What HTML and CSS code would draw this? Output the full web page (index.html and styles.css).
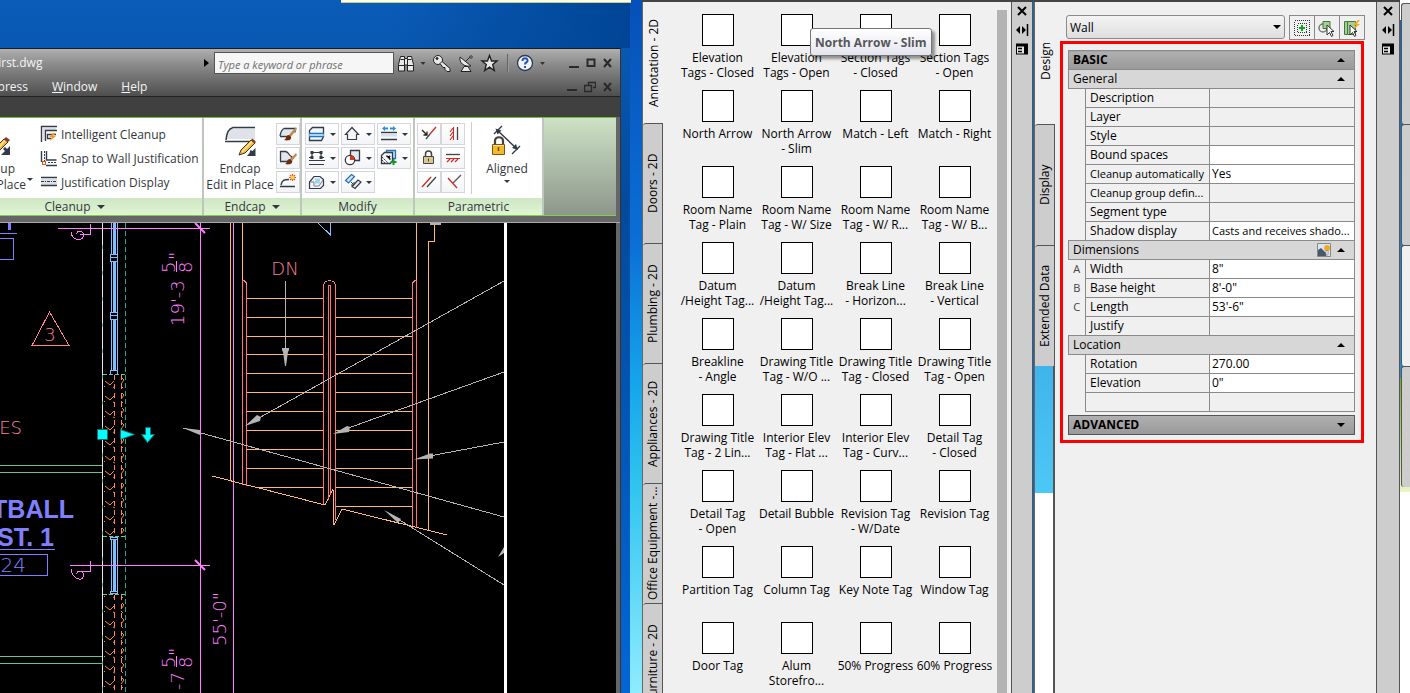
FILE: index.html
```html
<!DOCTYPE html>
<html lang="en">
<head>
<meta charset="utf-8">
<title>First.dwg</title>
<link rel="stylesheet" href="styles.css">
</head>
<body>
<div class="desktop">
<main class="workspace">
  <div class="hint-strip"></div>
  <section class="cad">
    <header class="cad-head">
      <div class="title-row">
        <span class="doc-name"><span>First.dwg</span></span>
        <span class="search-arrow"></span>
        <input class="search" type="text" placeholder="Type a keyword or phrase" aria-label="Search">
        <div class="tools">
          <svg width="152" height="22" viewBox="396 52 152 22" aria-hidden="true">
            <g fill="#e8e8e8" stroke="#222" stroke-width="1"><path d="M400.500 56.500h4v2h3v-2h4l2 8v6.500h-6v-6h-3v6h-6v-6.500zM398.500 65.500h6M407.500 65.500h6M400.500 59.500h4M407.500 59.500h4M404.500 59v6M407.500 59v6"/>
            <circle cx="438" cy="60" r="4.500"/><path d="M440 63.500l2-2 8 7v3h-3l-2-2v-2h-2z"/><circle cx="437" cy="58.500" r="1" fill="#222"/>
            <path d="M460 57c-1 6 4 10 11 9zM461 71.500h10l-3-5h-4zM466 61l4-4"/><circle cx="471" cy="57" r="1.200"/>
            <path d="M489.500 55.500l2 5.500h5.500l-4.300 3.500 1.600 6-4.800-3.300-4.800 3.300 1.600-6L482 61h5.500z" stroke-width="1.400"/></g>
            <path d="M420.500 62h5l-2.500 3zM540 62h5l-2.500 3z" fill="#333"/><path d="M507.500 54v18" stroke="#666"/><path d="M508.500 54v18" stroke="#999"/>
            <circle cx="525" cy="63" r="7.500" fill="#f2f4f8" stroke="#2b3a55" stroke-width="1.300"/><path d="M522.500 61c0-4 5.500-3.500 5 0-.3 1.500-2.500 1.500-2.500 3.500M525 66v2" fill="none" stroke="#2552b8" stroke-width="2"/>
          </svg>
        </div>
        <div class="winbtns">
          <button aria-label="Minimize"><svg width="12" height="12" viewBox="0 0 12 12"><path d="M1 10h10" stroke="#2a2a2a" stroke-width="2"/></svg></button>
          <button aria-label="Maximize"><svg width="12" height="12" viewBox="0 0 12 12"><path d="M2.500 2.500h7v6.500h-7z" fill="none" stroke="#2a2a2a" stroke-width="2"/></svg></button>
          <button aria-label="Close"><svg width="12" height="12" viewBox="0 0 12 12"><path d="M2 2l7 8M9 2l-7 8" stroke="#2a2a2a" stroke-width="2"/></svg></button>
        </div>
      </div>
      <div class="menu-row">
        <nav class="menu"><a class="menu-cut" href="#"><span>Express</span></a><a href="#"><u>W</u>indow</a><a href="#"><u>H</u>elp</a></nav>
        <div class="winbtns">
          <button aria-label="Minimize drawing"><svg width="12" height="12" viewBox="0 0 12 12"><path d="M1 9h10" stroke="#2a2a2a" stroke-width="2"/></svg></button>
          <button aria-label="Restore drawing"><svg width="12" height="12" viewBox="0 0 12 12"><path d="M4.500 4V1.500h7v5H9M.5 4.500h7v6h-7z" fill="none" stroke="#2a2a2a" stroke-width="1.400"/></svg></button>
          <button aria-label="Close drawing"><svg width="12" height="12" viewBox="0 0 12 12"><path d="M2 2l7 8M9 2l-7 8" stroke="#2a2a2a" stroke-width="2"/></svg></button>
        </div>
      </div>
    </header>
    <div class="tabs-band"></div>
    <div class="ribbon">
      <section class="panel p-clean">
        <div class="panel-body">
          <button class="big cut"><svg width="32" height="34" viewBox="0 0 32 34"><path d="M14 30l2-5 10-10 4 3-10 10z" fill="#f5b93c" stroke="#4a3216"/><path d="M17 27L27 16.500" stroke="#ffe9a8" stroke-width="1.300"/><path d="M26 15l2-2 4 3-2 2z" fill="#8a3a1a"/><path d="M23 31h9v-9l-3 3-2-2-2 2 2 2z" fill="#333c46"/></svg><span>Cleanup</span><span>Edit in Place</span></button>
          <i class="caret side"></i>
          <div class="cmds">
            <button><svg width="18" height="18" viewBox="0 0 18 18"><path d="M3 3h13v2H5v10H3z" fill="#dcdfe6"/><path d="M1.500 17V1.500H17" fill="none" stroke="#333c46" stroke-width="1.400"/><path d="M5.500 16V5.500H17M16 9.500H7.500v4h4" fill="none" stroke="#333c46" stroke-width="1.300"/><path d="M13 8l-4 4h3l-2 4 6-5h-3l3-3z" fill="#f29a1f"/></svg>Intelligent Cleanup</button>
            <button><svg width="18" height="18" viewBox="0 0 18 18"><path d="M1.500 2v11M6.500 2v9h10M6 16.500h11" fill="none" stroke="#333c46" stroke-width="1.400"/><path d="M4.500 2v10M8 13.500h9" stroke="#333c46" stroke-dasharray="2 1"/><rect x="2.500" y="12.500" width="3" height="3" fill="#fff" stroke="#e05a20"/></svg>Snap to Wall Justification</button>
            <button><svg width="18" height="18" viewBox="0 0 18 18"><path d="M1 6h16v6H1z" fill="#dcdfe6"/><path d="M1 4.500h16M1 12.500h16" stroke="#333c46" stroke-width="1.400"/><path d="M1 8.500h16" stroke="#333c46" stroke-dasharray="3 1 1 1"/></svg>Justification Display</button>
          </div>
        </div>
        <h2>Cleanup <i class="caret"></i></h2>
      </section>
      <section class="panel p-end">
        <div class="panel-body">
          <button class="big"><svg width="32" height="34" viewBox="0 0 32 34"><path d="M3.500 15C4 9 6 5 9 4.500h22V15z" fill="#dfe2e9"/><path d="M1 17.500h30M2 16c1-7 2-11 7-12.500h22" fill="none" stroke="#333c46" stroke-width="1.500"/><path d="M15 31l2-5 10-10 4 3-10 10z" fill="#f5b93c" stroke="#4a3216"/><path d="M18 28l10-10.500" stroke="#ffe9a8" stroke-width="1.300"/><path d="M27 16l1.500-1.500L32 18l-1.500 1.500z" fill="#8a3a1a"/><path d="M23 32h8.500v-8l-3 3-2-1-1 3z" fill="#333c46"/></svg><span>Endcap</span><span>Edit in Place</span></button>
          <div class="minis one">
            <button aria-label="Endcap style"><svg width="18" height="18" viewBox="0 0 18 18"><path d="M1 11c1-4 1-6 4-7.500h11v4M1 11.500h8" fill="#e3e6ec" stroke="#333c46" stroke-width="1.300"/><path d="M17 2l-8 9 2 2 7-9z" fill="#b98b52"/><path d="M10 10c-4 0-2 4-5 5 4 1 8 0 7-3z" fill="#6b2f10"/></svg></button>
            <button aria-label="Opening endcap"><svg width="18" height="18" viewBox="0 0 18 18"><path d="M1.500 12V2.500h5c4 1 3 4 6 5v5H1" fill="#e3e6ec" stroke="#333c46" stroke-width="1.300"/><path d="M17 4l-7 7 2 2 6-7z" fill="#b98b52"/><path d="M11 10c-4 0-2 4-5 5 4 1 8 0 7-3z" fill="#6b2f10"/></svg></button>
            <button aria-label="New endcap"><svg width="18" height="18" viewBox="0 0 18 18"><path d="M2 12c1-5 3-5.500 8-5.500M1 13.500h15" fill="none" stroke="#333c46" stroke-width="1.400"/><path d="M13.500 1v7M10 4.500h7M11 2l5 5M16 2l-5 5" stroke="#e8541c" stroke-width="1.200"/><circle cx="13.500" cy="4.500" r="1.800" fill="#ffd84a"/></svg></button>
          </div>
        </div>
        <h2>Endcap <i class="caret"></i></h2>
      </section>
      <section class="panel p-mod">
        <div class="panel-body">
          <div class="minis three">
            <button aria-label="Cut"><svg width="18" height="18" viewBox="0 0 18 18"><path d="M1.500 15.500v-10l3-3h11v9l-2 4z" fill="#f4f5f8" stroke="#333c46" stroke-width="1.300"/><path d="M1 8.500h15M1 11.500h15" stroke="#1976c8" stroke-width="1.500"/><path d="M1 10h15" stroke="#a8d4f4" stroke-width="1.500"/></svg><i class="caret"></i></button>
            <button aria-label="Roof line"><svg width="18" height="18" viewBox="0 0 18 18"><path d="M1.500 9.500L8 2.500l6.500 7h-2v5h-9v-5z" fill="#f4f5f8" stroke="#333c46" stroke-width="1.200"/></svg><i class="caret"></i></button>
            <button aria-label="Offset"><svg width="18" height="18" viewBox="0 0 18 18"><path d="M4 3.500h4M10 3.500h4" stroke="#2a8fe0" stroke-width="2"/><path d="M5 1L2 3.500 5 6zM13 1l3 2.500L13 6z" fill="#2a8fe0"/><path d="M1 7.500h16M1 14.500h16" stroke="#333c46" stroke-width="1.300"/><path d="M1 8.500h16v3H1z" fill="#dcdfe6"/></svg><i class="caret"></i></button>
            <button aria-label="Vertex"><svg width="18" height="18" viewBox="0 0 18 18"><path d="M1 8.500h3v-5h9v5h3M1 11.500h16M1 15.500h15" fill="none" stroke="#333c46" stroke-width="1.200"/><path d="M2.500 2h3v3h-3zM11.500 2h3v3h-3zM2.500 7h3v3h-3zM11.500 7h3v3h-3z" fill="#333c46"/></svg><i class="caret"></i></button>
            <button aria-label="Interference"><svg width="18" height="18" viewBox="0 0 18 18"><path d="M6.500 1.500h9v10h-9z" fill="#e6e8ee" stroke="#333c46" stroke-width="1.300"/><circle cx="6" cy="11" r="4.700" fill="#fff" stroke="#333c46" stroke-width="1.300"/><path d="M6 11V6.500c3 0 4.500 2 4.500 4.500z" fill="#d8341c"/></svg><i class="caret"></i></button>
            <button aria-label="Add body"><svg width="18" height="18" viewBox="0 0 18 18"><path d="M6.500 4V1.500h9v8H13" fill="#bfe0f8" stroke="#2571b8" stroke-width="1.300"/><path d="M1.500 6.500l3-3h8v8l-2 3h-9z" fill="#f4f5f8" stroke="#333c46" stroke-width="1.300"/><path d="M2 8l7 7M2 11l4 4M6 7h4v4" stroke="#333c46" stroke-dasharray="2 1"/><path d="M13.500 10v6M10.500 13h6" stroke="#12962a" stroke-width="2"/></svg><i class="caret"></i></button>
            <button aria-label="Boolean"><svg width="18" height="18" viewBox="0 0 18 18"><path d="M1.500 15.500V9L6 3.500h6l3.500 3v6l-3 3z" fill="#eef2f6" stroke="#333c46" stroke-width="1.200"/><path d="M2 9h4v4h5l4-6" fill="none" stroke="#7a858f"/><path d="M7 5.500h5v5H7z" fill="#9fd4ea"/></svg><i class="caret"></i></button>
            <button aria-label="Reverse"><svg width="18" height="18" viewBox="0 0 18 18"><path d="M1.500 7.500l6-6 3 2-6 6.500z" fill="#cfe6fa" stroke="#2571b8" stroke-width="1.200"/><path d="M8 13.500l6-6.500 3 2-6 6.500z" fill="#e6e8ee" stroke="#333c46" stroke-width="1.200"/><path d="M7 9l3 3M10 9v3H7" fill="none" stroke="#333c46"/></svg><i class="caret"></i></button>
          </div>
        </div>
        <h2>Modify</h2>
      </section>
      <section class="panel p-par">
        <div class="panel-body">
          <div class="minis two">
            <button aria-label="Coincident"><svg width="18" height="18" viewBox="0 0 18 18"><path d="M2 5l5 5M7 6.500V10H3.500" fill="none" stroke="#222" stroke-width="1.300"/><path d="M6 14l4-5" stroke="#444" stroke-width="1.300"/><path d="M10 9l6-7" stroke="#d02a24" stroke-width="1.300"/></svg></button>
            <button aria-label="Vertical"><svg width="18" height="18" viewBox="0 0 18 18"><path d="M9.500 2v13M9 3L6 7M9 7l-3 4M9 11l-3 4" stroke="#d02a24" stroke-width="1.100"/><path d="M13.500 2v13" stroke="#444" stroke-width="1.300"/></svg></button>
            <button aria-label="Fix"><svg width="18" height="18" viewBox="0 0 18 18"><path d="M5.500 8V5c0-4 6-4 6 0v3" fill="none" stroke="#444" stroke-width="1.500"/><path d="M3.500 7.500h10v7h-10z" fill="#d9c78e" stroke="#444"/><path d="M8.500 9.500v3" stroke="#444"/></svg></button>
            <button aria-label="Horizontal"><svg width="18" height="18" viewBox="0 0 18 18"><path d="M2 5.500h14" stroke="#444" stroke-width="1.300"/><path d="M2 9.500h14M6 10l-3 3M10 10l-3 3M14 10l-3 3" stroke="#d02a24" stroke-width="1.200"/></svg></button>
            <button aria-label="Parallel"><svg width="18" height="18" viewBox="0 0 18 18"><path d="M2 14L11 4" stroke="#d02a24" stroke-width="1.300"/><path d="M7 14l9-10" stroke="#444" stroke-width="1.300"/></svg></button>
            <button aria-label="Perpendicular"><svg width="18" height="18" viewBox="0 0 18 18"><path d="M9 10l8-8" stroke="#555" stroke-width="1.300"/><path d="M4 5l9 10" stroke="#d02a24" stroke-width="1.300"/></svg></button>
          </div>
          <div class="rule"></div>
          <button class="big aligned"><svg width="32" height="34" viewBox="0 0 32 34"><path d="M6 6l19 18M3 10l8-8M21 30l8-8" stroke="#333c46" stroke-width="1.400"/><path d="M4.500 4.500l6 2-4 4zM27 26l-6-2 4-4z" fill="#333c46"/><path d="M4 21v-4c0-5 8-5 8 0v4" fill="none" stroke="#494130" stroke-width="2.200"/><path d="M1.500 20.500h12v10h-12z" fill="#f6b92b" stroke="#7a5410"/><path d="M2 21.500h11" stroke="#ffe08a"/><path d="M7.500 23v4" stroke="#6b4a10" stroke-width="1.500"/></svg><span>Aligned</span><i class="caret"></i></button>
        </div>
        <h2>Parametric</h2>
      </section>
      <div class="ribbon-rest"></div>
    </div>
    <div class="frame-band"></div>
    <div class="canvas">
      <svg class="drawing" width="616" height="470" viewBox="0 223 616 470">
        <defs>
          <pattern id="brick" x="103" y="374" width="23" height="15" patternUnits="userSpaceOnUse">
            <path d="M2 7l5 4 4-4M1 12l1 1M10 13l2 1M19 4l2 2-3 4M18 12l2 2" fill="none" stroke="#ff8c1a"/>
          </pattern>
        </defs>
        <g fill="none" shape-rendering="crispEdges">
          <path d="M102.500 223v470" stroke="#63c9a0"/><path d="M102.500 223v470" stroke="#e8e8e8" stroke-dasharray="22 4"/>
          <path d="M125.500 223v470" stroke="#1fa894" stroke-dasharray="5 3"/>
          <path d="M103 374h22v163h-22zM103 594h22v99h-22z" fill="url(#brick)"/>
          <path d="M114.500 375v162M121.500 375v162M114.500 595v98M121.500 595v98" stroke="#ff7f7f" stroke-dasharray="5 4"/>
          <path d="M103 374.500h22M103 536.500h22M103 594.500h22" stroke="#63c9a0" stroke-dasharray="4 2"/>
          <g stroke="#7fbfff"><path d="M111.500 223v149M113.500 223v149M114.500 223v149M117.500 223v149M111.500 539v53M113.500 539v53M114.500 539v53M117.500 539v53M115.500 223v149M115.500 539v53"/><path d="M110.500 254.500h7v7h-7zM110.500 312.500h7v7h-7zM110.500 374V370.500h7v3M110.500 537.500h7v2h-7zM110.500 591.500h7v2h-7z" fill="#000"/><path d="M110 257.500h7M110 315.500h7"/></g>
          <path d="M0 465.500h102M0 472.500h102M0 656.500h102M0 663.500h102" stroke="#5fc795"/>
          <g stroke="#ff7fff"><path d="M200.500 223v470M233.500 223v470M58 228.500h152M70 565.500h140"/><path d="M195 223l10 10M195 560l10 10" stroke-width="2" shape-rendering="auto"/></g>
          <g stroke="#ff7fff"><path d="M90.500 224v10h-11M71 232c1 9 10 9 12 5 2-6-4-8-7-3M90.500 561v10h-11M71 569c1 9 10 13 12 8 2-6-4-8-7-3"/></g>
          <g stroke="#ffb973"><path d="M230.500 223v258M242.500 223v58M416.500 223v58M434.500 223v18.500h-6V530"/>
          <path d="M247 298.500h76M336 298.500h76M247 317.500h76M336 317.500h76M247 336.500h76M336 336.500h76M247 354.500h76M336 354.500h76M247 373.500h76M336 373.500h76M247 392.500h76M336 392.500h76M247 411.500h76M336 411.500h76M247 430.500h76M336 430.500h76M247 449.500h76M336 449.500h76M247 468.500h76M336 468.500h76M256 487.500h67M336 487.500h76M336 506.500h76"/>
          <path d="M212 476l113 29 8-16 1 36 8-16 105 26"/></g>
          <g stroke="#ff7373"><path d="M242.500 280v205M246.500 283v203M323.500 285v219M335.500 285v235M328.500 500V285.500h2V495M412.500 283v243M416.500 281v247"/><path d="M242.500 280.500c2 0 4 1 4 4M323.500 286c0-7 12-7 12 0M416.500 280.500c-2 0-4 1-4 4" stroke="#ff8099"/></g>
          <path d="M318 223l12.500 12V223" stroke="#7fbfff"/>
          <g stroke="#b4b4b4"><path d="M285.500 281v70M504 281L250 423M504 372L340 431M504 442l-80 15M183 428l321 89M390 514l114 71"/></g>
          <path d="M505.500 223v470" stroke="#fff" stroke-width="3"/>
          <path d="M32 345.500h37L49.500 312z" stroke="#ff8099"/>
          <path d="M0 233.500h17M0 238.500h13.500v21H0M0 554.500h47.500v21H0" stroke="#8080ff"/><path d="M0 549.500h55" stroke="#8080ff"/>
        </g>
        <g fill="#b4b4b4"><path d="M282 348h7v2l-1 2-2 14h-1l-2-14-1-2zM245 426l12-11 4 2-1 4zM333 434l14-8 3 1-1 5zM414 459.500l16-6 3 0v5zM183 428l17 2v5zM384 510l17 9-3 4zM430 223h11v2h-11zM498 557l6-10v6z"/></g>
        <path d="M8 223h3v7H8z" fill="#8080ff"/>
        <g fill="#00ffff" stroke="#116d6d"><path d="M97.500 429.500h10v10h-10zM120.500 429.500l14 5-14 5zM145.500 427.500h5v7h4l-7 8-6-8h4z"/></g>
        <g class="cad-text">
          <text class="pink" x="50" y="341" text-anchor="middle">3</text>
          <text class="pink" x="22" y="434" text-anchor="end">ES</text>
          <text class="pink" x="285" y="275" text-anchor="middle">DN</text>
          <text class="violet" x="26" y="572" text-anchor="end">24</text>
          <text class="violet heavy" x="74" y="518" text-anchor="end">OTBALL</text>
          <text class="violet heavy" x="54" y="546" text-anchor="end">ST. 1</text>
          <g class="magenta">
            <text transform="translate(184 326) rotate(-90)">19'-3</text>
            <text transform="translate(175 273) rotate(-90)">5</text><text transform="translate(192 273) rotate(-90)">8</text><path d="M176.500 261v11" stroke="#ff7fff"/><text transform="translate(182 260) rotate(-90)">"</text>
            <text transform="translate(184 690) rotate(-90)">-7</text>
            <text transform="translate(175 668) rotate(-90)">5</text><text transform="translate(192 668) rotate(-90)">8</text><path d="M176.500 656v11" stroke="#ff7fff"/><text transform="translate(182 656) rotate(-90)">"</text>
            <text transform="translate(226 646) rotate(-90)">55'-0"</text>
          </g>
        </g>
      </svg>
    </div>
  </section>
</main>

<aside class="palette tools-palette">
  <div class="vtabs">
    <button class="on">Annotation - 2D</button><button>Doors - 2D</button><button>Plumbing - 2D</button><button>Appliances - 2D</button><button>Office Equipment -...</button><button>Furniture - 2D</button>
  </div>
  <div class="items">
    <button><i></i>Elevation<br>Tags - Closed</button><button><i></i>Elevation<br>Tags - Open</button><button><i></i>Section Tags<br>- Closed</button><button><i></i>Section Tags<br>- Open</button>
    <button><i></i>North Arrow</button><button><i></i>North Arrow<br>- Slim</button><button><i></i>Match - Left</button><button><i></i>Match - Right</button>
    <button><i></i>Room Name<br>Tag - Plain</button><button><i></i>Room Name<br>Tag - W/ Size</button><button><i></i>Room Name<br>Tag - W/ R...</button><button><i></i>Room Name<br>Tag - W/ B...</button>
    <button><i></i>Datum<br>/Height Tag...</button><button><i></i>Datum<br>/Height Tag...</button><button><i></i>Break Line<br>- Horizon...</button><button><i></i>Break Line<br>- Vertical</button>
    <button><i></i>Breakline<br>- Angle</button><button><i></i>Drawing Title<br>Tag - W/O ...</button><button><i></i>Drawing Title<br>Tag - Closed</button><button><i></i>Drawing Title<br>Tag - Open</button>
    <button><i></i>Drawing Title<br>Tag - 2 Lin...</button><button><i></i>Interior Elev<br>Tag - Flat ...</button><button><i></i>Interior Elev<br>Tag - Curv...</button><button><i></i>Detail Tag<br>- Closed</button>
    <button><i></i>Detail Tag<br>- Open</button><button><i></i>Detail Bubble</button><button><i></i>Revision Tag<br>- W/Date</button><button><i></i>Revision Tag</button>
    <button><i></i>Partition Tag</button><button><i></i>Column Tag</button><button><i></i>Key Note Tag</button><button><i></i>Window Tag</button>
    <button><i></i>Door Tag</button><button><i></i>Alum<br>Storefro...</button><button><i></i>50% Progress</button><button><i></i>60% Progress</button>
  </div>
  <div class="scroll"></div>
  <div class="strip">
    <button aria-label="Close palette"><svg width="14" height="14" viewBox="0 0 14 14"><path d="M3 3l8 8M11 3l-8 8" stroke="#000" stroke-width="2"/></svg></button>
    <button aria-label="Auto-hide"><svg width="14" height="14" viewBox="0 0 14 14"><path d="M5 3v8L1 7zM7 3v8l4-4z"/><path d="M12.500 1v12" stroke="#000" stroke-width="1.500"/></svg></button>
    <button aria-label="Properties"><svg width="14" height="14" viewBox="0 0 14 14"><path d="M1 1.500h12v11H1z"/><path d="M2 4.500h7v7H2z" fill="#e4e4e4"/><path d="M3 6.500h4M3 9.500h4" stroke="#000" stroke-width="1.300"/></svg></button>
  </div>
  <div class="tooltip" role="tooltip">North Arrow - Slim</div>
</aside>

<aside class="palette props-palette">
  <div class="vtabs">
    <button class="on">Design</button><button>Display</button><button>Extended Data</button><div class="tab-gap"></div>
  </div>
  <div class="props">
    <div class="picker">
      <div class="combo"><select aria-label="Object type"><option>Wall</option></select><i class="down"></i></div>
      <div class="seg">
        <button aria-label="Toggle pickadd"><svg width="20" height="20" viewBox="0 0 20 20"><path d="M2.500 2.500h15v15h-15zM5.500 5.500h9v9h-9z" fill="none" stroke="#333" stroke-dasharray="1 1" shape-rendering="crispEdges"/><path d="M10 7v6M7 10h6" stroke="#0ca51c" stroke-width="2"/></svg></button>
        <button aria-label="Select objects"><svg width="20" height="20" viewBox="0 0 20 20"><circle cx="6" cy="10" r="4" fill="#eee" stroke="#777" stroke-width="1.500"/><path d="M6 3.500h7v7H6z" fill="#a5cf96" stroke="#3f7a35"/><path d="M10 7v10l2.500-2.500 2 4 1.500-1-2-4h3z" fill="#fff" stroke="#333"/></svg></button>
        <button aria-label="Quick select"><svg width="20" height="20" viewBox="0 0 20 20"><path d="M2.500 3.500h3v13h-3zM5.500 3.500h8v13h-8z" fill="#a5cf96" stroke="#3f7a35"/><path d="M16 2l-5 5h3l-3 5 7-6h-3l3-4z" fill="#f7a823"/><path d="M8 7v10l2.500-2.500 2 4 1.500-1-2-4h3z" fill="#fff" stroke="#333"/></svg></button>
      </div>
    </div>
    <div class="highlight">
      <table>
        <colgroup><col class="c-mark"><col class="c-label"><col></colgroup>
        <tbody>
        <tr class="main"><th colspan="3">BASIC<i class="up"></i></th></tr>
        <tr class="group"><th colspan="3">General<i class="up"></i></th></tr>
        <tr><td></td><td>Description</td><td></td></tr>
        <tr><td></td><td>Layer</td><td></td></tr>
        <tr><td></td><td>Style</td><td></td></tr>
        <tr><td></td><td>Bound spaces</td><td class="w"></td></tr>
        <tr><td></td><td class="long">Cleanup automatically</td><td class="w">Yes</td></tr>
        <tr><td></td><td class="long">Cleanup group defin...</td><td></td></tr>
        <tr><td></td><td>Segment type</td><td></td></tr>
        <tr><td></td><td>Shadow display</td><td class="w long">Casts and receives shado...</td></tr>
        <tr class="group"><th colspan="3">Dimensions<i class="up"></i><svg class="pic" width="14" height="14" viewBox="0 0 14 14"><path d="M.5.500h13v13H.500z" fill="#dce6ef" stroke="#888"/><path d="M1 13V7l3-2 5 5v3z" fill="#46586a"/><circle cx="10" cy="5" r="3" fill="#f7a823"/><path d="M9 7.500h2v4.500H9z" fill="#fff" stroke="#777" stroke-width=".7"/></svg></th></tr>
        <tr><td>A</td><td>Width</td><td class="w">8"</td></tr>
        <tr><td>B</td><td>Base height</td><td class="w">8'-0"</td></tr>
        <tr><td>C</td><td>Length</td><td class="w">53'-6"</td></tr>
        <tr><td></td><td>Justify</td><td></td></tr>
        <tr class="group"><th colspan="3">Location<i class="up"></i></th></tr>
        <tr><td></td><td>Rotation</td><td class="w">270.00</td></tr>
        <tr><td></td><td>Elevation</td><td class="w">0"</td></tr>
        <tr class="end"><td></td><td></td><td></td></tr>
        </tbody>
      </table>
      <button class="advanced">ADVANCED<i class="down"></i></button>
    </div>
  </div>
  <div class="strip">
    <button aria-label="Close properties"><svg width="14" height="14" viewBox="0 0 14 14"><path d="M3 3l8 8M11 3l-8 8" stroke="#000" stroke-width="2"/></svg></button>
    <button aria-label="Auto-hide properties"><svg width="14" height="14" viewBox="0 0 14 14"><path d="M5 3v8L1 7zM7 3v8l4-4z"/><path d="M12.500 1v12" stroke="#000" stroke-width="1.500"/></svg></button>
    <button aria-label="Properties menu"><svg width="14" height="14" viewBox="0 0 14 14"><path d="M1 1.500h12v11H1z"/><path d="M2 4.500h7v7H2z" fill="#e4e4e4"/><path d="M3 6.500h4M3 9.500h4" stroke="#000" stroke-width="1.300"/></svg></button>
  </div>
</aside>

<aside class="next-palette"><i></i><i></i><i class="on"></i><i></i></aside>
</div>
</body>
</html>
```
FILE: styles.css
```css
* { box-sizing: border-box; }
body { margin: 0; font: 12px/15px "Open Sans", "Noto Sans", sans-serif; color: #000; }
button { font: inherit; color: inherit; border: 0; padding: 0; background: none; }
svg { display: block; flex: none; }
.desktop { display: flex; height: 100vh; overflow: hidden; background: #fff; }

/* drawing window */
.workspace {
  position: relative; flex: 1; min-width: 0; display: flex; padding: 48px 21px 0 0;
  background:
    linear-gradient(#0650b8, #0a6fd6 35%, #16a4ea 55%, #30c4ee 70%, #90ecff) right / 12px 100% no-repeat,
    linear-gradient(90deg, transparent 60%, #004494) top / 100% 48px no-repeat,
    linear-gradient(#0a5cb8, #034a9c 30%, #0366d6);
}
.hint-strip { position: absolute; top: 0; right: 11px; width: 290px; height: 3px; background: #ffffdc; border-bottom: 1px solid #c9c9a0; }
.cad { flex: 1; min-width: 0; display: flex; flex-direction: column; background: #666; border-top: 1px solid #1c1c1c; border-right: 1px solid #333; }
.cad-head { height: 48px; color: #f4f4f4; background: linear-gradient(#b0b0b0, #8e8e8e 30%, #4e4e4e); border-bottom: 1px solid #222; }
.title-row, .menu-row { display: flex; align-items: center; height: 27px; }
.menu-row { height: 21px; justify-content: space-between; }
.doc-name { flex: 1; }
.doc-name, .menu-cut { display: flex; }
.doc-name span { margin-left: -8px; }
.search-arrow { border: 4px solid transparent; border-left: 5px solid #000; border-right: 0; margin-right: 5px; }
.search { width: 180px; height: 22px; padding: 4px 3px 0; border: 1px solid #555; background: #f6f6f6; font: italic 11px/16px "Open Sans", sans-serif; }
.search::placeholder { color: #6f6f6f; opacity: 1; }
.tools { margin: 0 20px 0 2px; }
.winbtns { display: flex; gap: 6px; margin-right: 6px; }
.title-row .winbtns { gap: 5px; }
.menu { display: flex; gap: 24px; }
.menu a { color: inherit; text-decoration: none; }
.menu-cut { width: 28px; justify-content: flex-end; overflow: hidden; }
.tabs-band { height: 20px; background: #404040; }

.ribbon { display: flex; height: 99px; margin-right: 4px; border-top: 1px solid #6fbf3a; border-bottom: 1px solid #7fd04a; }
.panel { display: flex; flex-direction: column; background: #fff; border-right: 2px solid #bfc6bd; color: #33373d; }
.p-clean { width: 204px; overflow: hidden; }
.p-end { width: 98px; }
.p-mod { width: 113px; }
.p-par { width: 129px; }
.panel-body { flex: 1; display: flex; }
.panel h2 { height: 17px; margin: 0; display: flex; justify-content: center; align-items: center; gap: 6px; font-size: 12px; line-height: 17px; font-weight: 400; background: linear-gradient(#cfe6c4, #dff5d4); }
.panel.p-clean h2 { padding-right: 53px; }
.ribbon-rest { flex: 1; background: linear-gradient(#cde2c6, #8d968b); }
.caret { border: 4px solid transparent; border-top-color: #33373d; border-bottom: 0; }
.big { display: flex; flex-direction: column; align-items: center; width: 72px; padding-top: 6px; line-height: 16px; white-space: nowrap; }
.big svg { margin-bottom: 3px; }
.aligned { width: 76px; }
.cut { width: 26px; align-items: flex-end; }
.cut svg { margin-right: 16px; }
.cut span:first-of-type { margin-right: 11px; }
.side { margin: 60px 5px 0 1px; align-self: flex-start; border-width: 3px 3px 0; }
.cmds { display: flex; flex-direction: column; gap: 6px; padding: 7px 0 0 2px; }
.cmds button { display: flex; align-items: center; gap: 3px; height: 18px; white-space: nowrap; }
.minis { display: grid; align-content: start; gap: 2px; padding-top: 5px; }
.minis button { display: flex; align-items: center; justify-content: center; height: 22px; border: 1px solid #d4d6dc; background: linear-gradient(#fff, #f3f4f6); }
.minis .caret { border-width: 3px 3px 0; margin-left: 4px; }
.one { grid-template-columns: 24px; }
.two { grid-template-columns: 24px 24px; column-gap: 0; padding-left: 2px; }
.three { grid-template-columns: 34px 34px 34px; padding-left: 3px; }
.rule { width: 1px; margin: 4px 0 4px 6px; background: #ccc; }
.big .caret { border-width: 3px 3px 0; margin-top: 3px; }
.frame-band { height: 7px; background: #666; border-bottom: 1px solid #aaa; }
.canvas { flex: 1; min-height: 0; margin-right: 4px; overflow: hidden; background: #000; }
.cad-text { font-family: "DejaVu Sans Light", "DejaVu Sans", sans-serif; font-size: 18px; font-weight: 200; }
.pink { fill: #ff8099; }
.violet { fill: #8080ff; font-size: 20px; }
.heavy { font: 700 25px "Liberation Sans", sans-serif; }
.magenta { fill: #ff7fff; }

/* palettes */
.palette { position: relative; display: flex; border-top: 2px solid #444; background: #f0f0f0; }
.tools-palette { width: 392px; border-right: 1px solid #1b66b0; }
.vtabs { width: 21px; flex: none; display: flex; flex-direction: column; overflow: hidden; border-left: 1px solid #666; }
.vtabs button { height: 120px; flex: none; writing-mode: vertical-rl; transform: rotate(180deg); background: #cdcdcd; border-left: 1px solid #555; border-bottom: 1px solid #555; border-radius: 0 0 3px 0; padding: 0 1px; white-space: nowrap; }
.vtabs .on { height: 121px; background: #f0f0f0; border-left: 0; border-bottom: 0; }
.items { flex: 1; display: grid; grid-template-columns: repeat(4, 79px); grid-auto-rows: 76px; padding: 12px 0 0 15px; overflow: hidden; }
.items button { display: block; padding: 0; text-align: center; align-self: start; white-space: nowrap; }
.items i { display: block; width: 32px; height: 32px; margin: 0 auto 4px; background: #fff; border: 1px solid #000; }
.scroll { width: 10px; margin: 8px 4px 0 0; background: #b4b4b4; }
.strip { width: 22px; flex: none; background: #cdcdcd; border-left: 1px solid #555; border-right: 1px solid #555; display: flex; flex-direction: column; align-items: center; gap: 5px; padding-top: 2px; }
.tooltip { position: absolute; left: 168px; top: 26px; padding: 5px 4px; height: 28px; border: 1px solid #767676; border-radius: 3px; background: linear-gradient(#fff, #e5e5f0); color: #575757; font-weight: 700; line-height: 17px; box-shadow: 3px 3px 3px rgba(0, 0, 0, .4); white-space: nowrap; }

.props-palette { width: 366px; }
.props-palette .strip { width: 24px; }
.props-palette .vtabs button { height: 121px; }
.props-palette .vtabs .on { height: 122px; padding-top: 4px; }
.tab-gap { flex: 1; border-right: 2px solid #555; background: linear-gradient(#3fb4ec, #4cc8f6) top / 100% 127px no-repeat #fff; }
.props { flex: 1; padding: 13px 12px 0 5px; }
.picker { display: flex; padding-left: 6px; gap: 4px; }
.combo { flex: 1; position: relative; }
.combo select { display: block; width: 100%; height: 24px; font: inherit; border: 1px solid #8a8a8a; border-radius: 3px; appearance: none; background: linear-gradient(#f4f4f4, #dedede); padding: 0 3px; }
.combo .down { position: absolute; top: 3px; right: 4px; margin: 7px 0; pointer-events: none; }
.seg { display: flex; }
.seg button { width: 26px; height: 25px; border: 1px solid #8a8a8a; margin-right: -1px; padding: 2px; }
.highlight { margin-top: 1px; border: 3px solid #f00; padding: 6px 6px 5px 5px; }
table { width: 100%; table-layout: fixed; border-collapse: collapse; }
.c-mark { width: 17px; }
.c-label { width: 124px; }
td, th { height: 19px; padding: 0 0 0 4px; line-height: 18px; border: 1px solid #8a8a8a; white-space: nowrap; text-align: left; font-weight: 400; }
td:first-child { border: 0; padding: 0; text-align: center; color: #444; font-size: 11px; }
td:last-child { padding-left: 2px; }
.long { font-size: 11px; }
.w { background: #fff; }
.main th, .advanced { background: linear-gradient(#b0b0b0, #999); font-weight: 700; }
.group th { background: #d7d7d7; }
.up, .down { float: right; margin: 7px 9px 0 0; border: 4px solid transparent; border-bottom: 4px solid #000; border-top: 0; }
.down { border-top: 4px solid #000; border-bottom: 0; }
.pic { float: right; margin: 2px 6px 0 0; }
.advanced { display: block; width: 100%; height: 20px; margin-top: 3px; padding-left: 4px; border: 1px solid #555; text-align: left; line-height: 18px; }

.next-palette { width: 10px; padding-top: 3px; overflow: hidden; background: linear-gradient(#fff 20px, #1667b8 20px, #2090e0 378px, #6fae2c 378px, #e8f5c8 492px, #fff 492px); }
.next-palette i { display: block; height: 121px; margin-left: 1px; background: #cdcdcd; border: 1px solid #555; border-width: 1px 0 0 1px; border-radius: 3px 0 0 3px; }
.next-palette .on { background: #f0f0f0; }
```
